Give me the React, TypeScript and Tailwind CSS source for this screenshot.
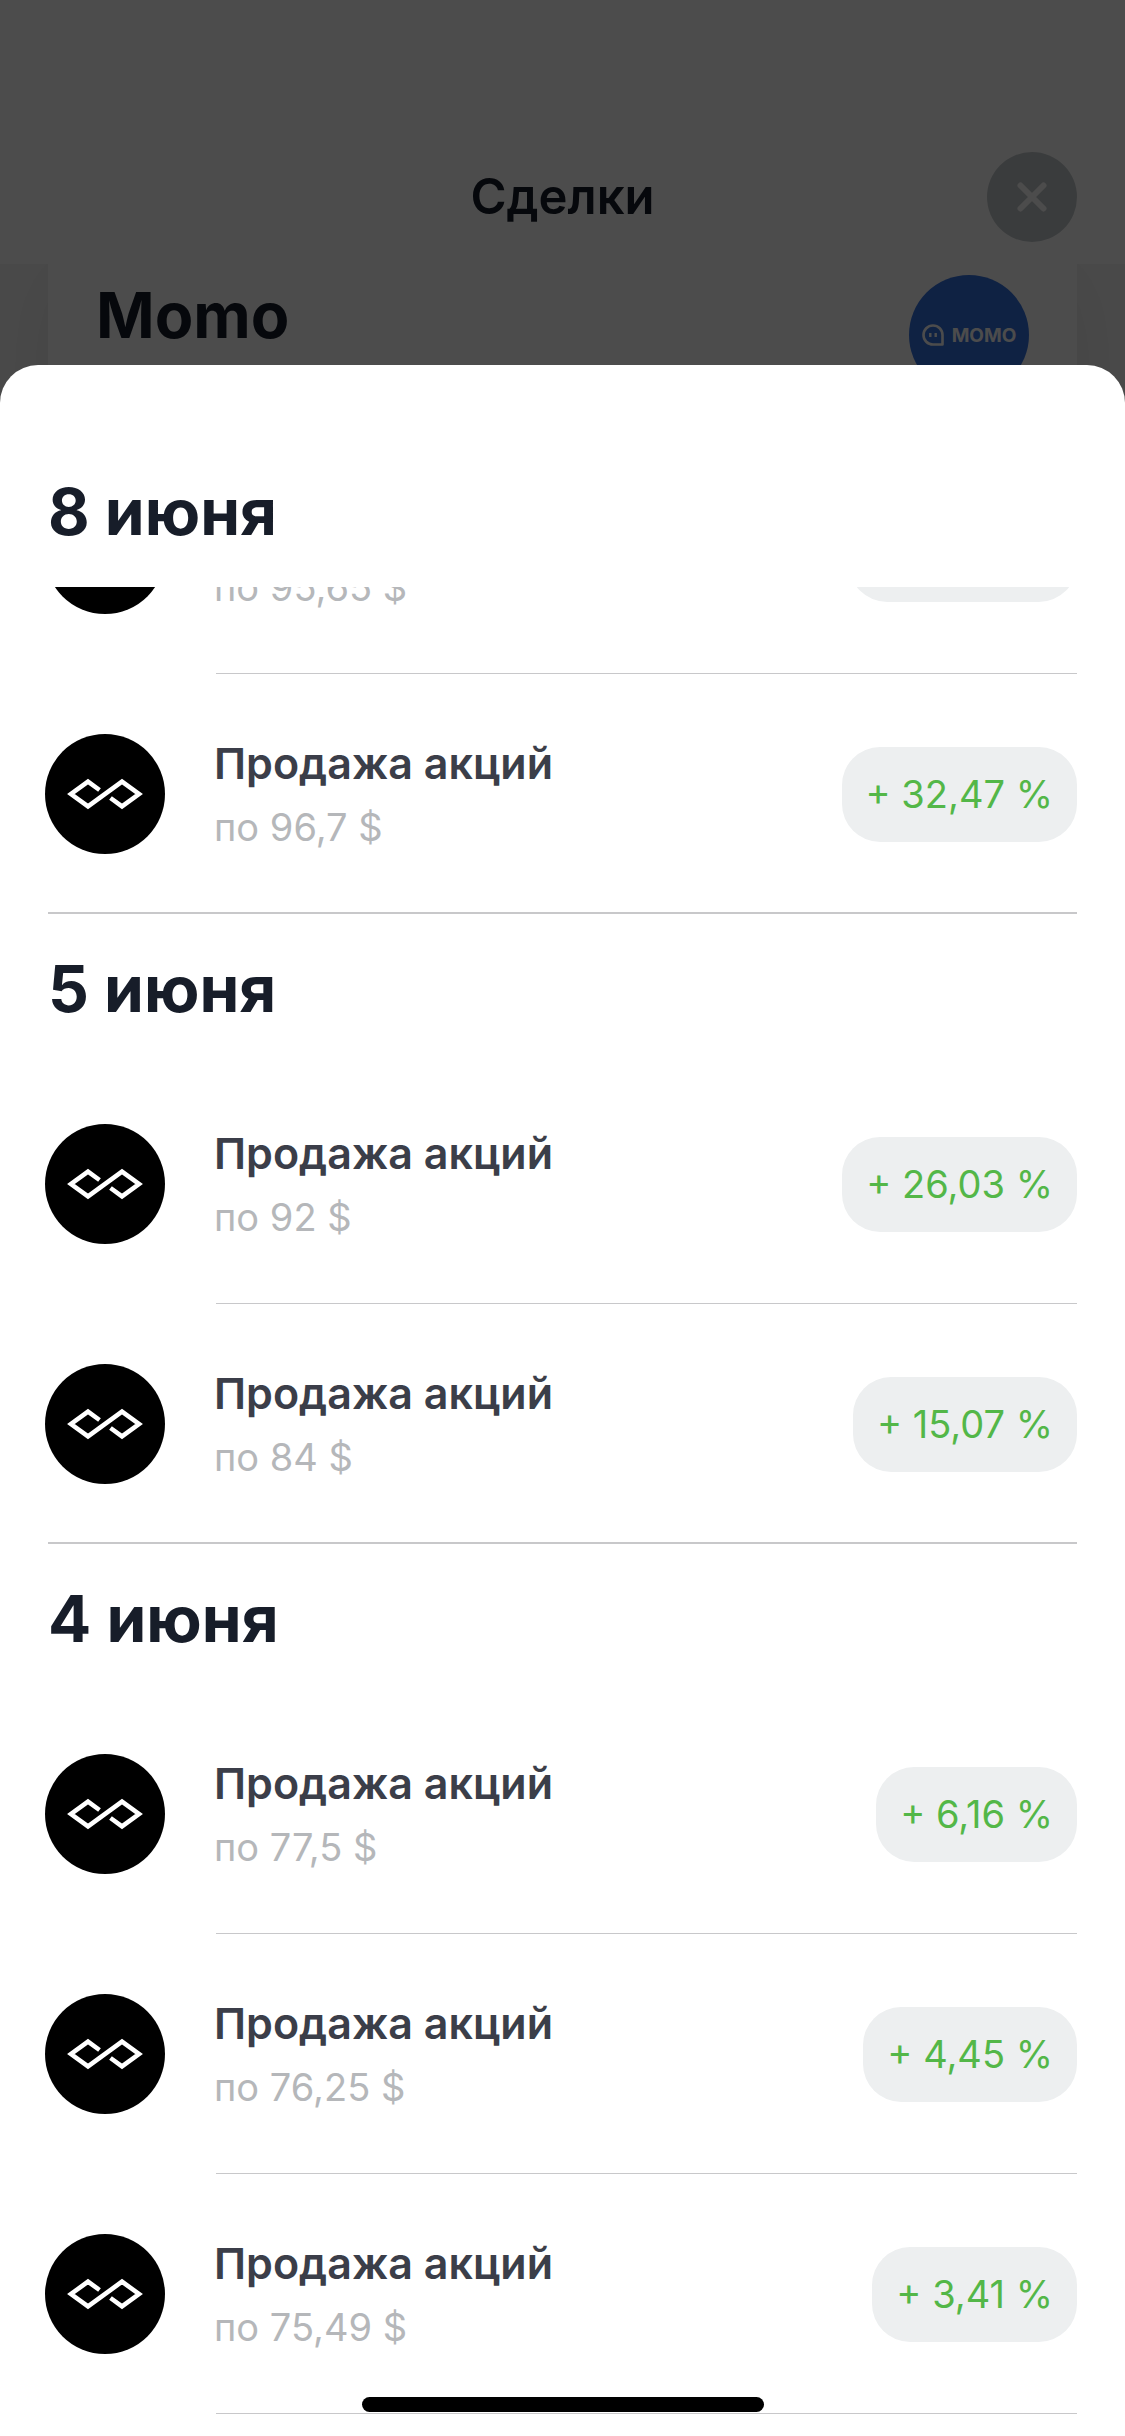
import { clsx } from 'clsx';

interface Deal {
  price: string;
  profit: string;
}

interface DealDay {
  date: string;
  deals: Deal[];
}

// The first day is scrolled: its first deal is half hidden under the date
const days: DealDay[] = [
  {
    date: '8 июня',
    deals: [
      { price: 'по 95,65 $', profit: '+ 31,03 %' },
      { price: 'по 96,7 $', profit: '+ 32,47 %' },
    ],
  },
  {
    date: '5 июня',
    deals: [
      { price: 'по 92 $', profit: '+ 26,03 %' },
      { price: 'по 84 $', profit: '+ 15,07 %' },
    ],
  },
  {
    date: '4 июня',
    deals: [
      { price: 'по 77,5 $', profit: '+ 6,16 %' },
      { price: 'по 76,25 $', profit: '+ 4,45 %' },
      { price: 'по 75,49 $', profit: '+ 3,41 %' },
    ],
  },
];

function BrokerLogo() {
  return (
    <svg viewBox="0 0 120 120" className="size-[120px] shrink-0" aria-hidden="true">
      <circle cx="60" cy="60" r="60" fill="#000" />
      <path
        d="M54.5 56 43 47.7 26 60l17 12.3 34-24.6L94 60 77 72.3 65.5 64"
        fill="none"
        stroke="#fff"
        strokeWidth="4.6"
      />
    </svg>
  );
}

function MomoLogo() {
  return (
    <div className="flex size-[120px] shrink-0 items-center justify-center gap-2 rounded-full bg-[#3572df] text-white">
      <svg viewBox="0 0 22 22" className="size-[22px]" fill="none" aria-hidden="true">
        <path
          d="M20.5 11v9.5H11A9.5 9.5 0 1 1 20.5 11Z"
          stroke="currentColor"
          strokeWidth="2.6"
          strokeLinejoin="round"
        />
        <path d="M8.3 9v4M13.7 9v4" stroke="currentColor" strokeWidth="2.4" />
      </svg>
      <span className="text-[19px] leading-none font-bold">MOMO</span>
    </div>
  );
}

function DealRow({ deal, last }: { deal: Deal; last: boolean }) {
  return (
    <li className="flex h-[240px] shrink-0 flex-col">
      <div className="flex flex-1 items-start gap-[49px] pt-[60px] pr-12 pl-[45px]">
        <BrokerLogo />
        <div className="min-w-0 flex-1">
          <h3 className="text-[43px] leading-[58px] font-semibold text-[#3b3e49]">Продажа акций</h3>
          <p className="text-[38px] leading-[70px] text-[#b5b7ba]">{deal.price}</p>
        </div>
        <div className="flex h-[120px] items-center">
          <span className="rounded-[38px] bg-[#edeff0] px-6 text-[38px] leading-[95px] whitespace-nowrap text-[#53b748]">
            {deal.profit}
          </span>
        </div>
      </div>
      <hr
        className={clsx(
          'mr-12 border-0 bg-[#c8c8ca]',
          last ? 'ml-12 h-0.5' : 'ml-[216px] h-px',
        )}
      />
    </li>
  );
}

function DaySection({ day, scrolled, open }: { day: DealDay; scrolled: boolean; open: boolean }) {
  return (
    <section>
      <h2 className="px-12 text-[64px] leading-[150px] font-bold text-[#171d29]">{day.date}</h2>
      <ul
        className={clsx(
          'flex flex-col',
          scrolled && 'h-[327px] justify-end overflow-hidden',
        )}
      >
        {day.deals.map((deal, i) => (
          <DealRow key={deal.price} deal={deal} last={!open && i === day.deals.length - 1} />
        ))}
      </ul>
    </section>
  );
}

// Screen under the sheet
function DealsScreen() {
  return (
    <div className="absolute inset-0 isolate overflow-hidden bg-[#f7f7f7]">
      <header className="relative z-10 grid h-[264px] grid-cols-[1fr_auto_1fr] items-center bg-white px-12 pt-[130px]">
        <h1 className="col-start-2 text-[49px] leading-[60px] font-semibold text-[#171d29]">Сделки</h1>
        <button
          type="button"
          aria-label="Закрыть"
          className="flex size-[90px] items-center justify-center justify-self-end rounded-full bg-[#c4cacd]"
        >
          <svg viewBox="0 0 30 30" className="size-[30px]" aria-hidden="true">
            <path d="M3.5 3.5 26.5 26.5M26.5 3.5 3.5 26.5" stroke="#fff" strokeWidth="6" strokeLinecap="round" />
          </svg>
        </button>
      </header>
      <div className="mx-12 flex h-[400px] items-start justify-between bg-white px-12 pt-[11px] shadow-[0_0_90px_rgba(0,0,0,0.08)]">
        <h2 className="text-[63px] leading-[80px] font-bold text-[#171d29]">Momo</h2>
        <MomoLogo />
      </div>
      <div className="absolute inset-0 z-20 bg-black/70" />
    </div>
  );
}

export default function App() {
  return (
    <div className="relative flex min-h-screen flex-col pt-[365px] font-[Inter,'Liberation_Sans',sans-serif]">
      <DealsScreen />
      <main className="relative flex-1 rounded-t-[38px] bg-white pt-[72px]">
        {days.map((day, i) => (
          <DaySection key={day.date} day={day} scrolled={i === 0} open={i === days.length - 1} />
        ))}
        {/* home indicator */}
        <div className="absolute bottom-6 left-1/2 h-[15px] w-[402px] -translate-x-1/2 rounded-full bg-black" />
      </main>
    </div>
  );
}
